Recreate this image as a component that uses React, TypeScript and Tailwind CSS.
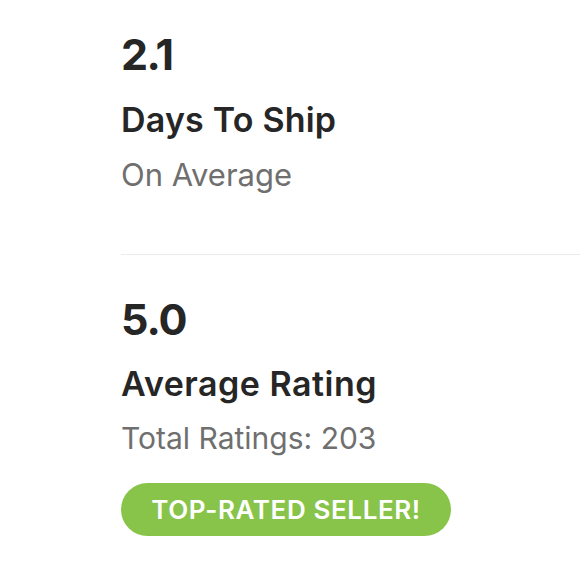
export default function App() {
  return (
    <div
      className="min-h-[580px] w-[580px] overflow-hidden bg-white pl-[121px] pt-[33px]"
      style={{ fontFamily: "Inter, 'Liberation Sans', sans-serif" }}
    >
      <div className="pr-[20px]">
        <div className="text-[43px] font-bold leading-[43px] tracking-[-1.5px] text-[#262626]">2.1</div>
        <div className="mt-[27px] text-[34px] font-semibold leading-[34px] tracking-[0.2px] text-[#262626]">Days To Ship</div>
        <div className="mt-[22px] text-[31px] leading-[31px] text-[#6f6f6f]">On Average</div>
      </div>

      <div className="mt-[64px] h-px w-full bg-[#ececec]" />

      <div>
        <div className="mt-[43px] text-[43px] font-bold leading-[43px] tracking-[-1px] text-[#262626]">5.0</div>
        <div className="mt-[26px] text-[34px] font-semibold leading-[34px] tracking-[0.5px] text-[#262626]">Average Rating</div>
        <div className="mt-[22px] text-[30px] leading-[30px] text-[#6f6f6f]">Total Ratings: 203</div>
        <div className="mt-[30px] flex h-[53px] w-[330px] items-center justify-center rounded-full bg-[#88c44a] text-[26px] font-semibold tracking-[0.6px] text-white">
          TOP-RATED SELLER!
        </div>
      </div>
    </div>
  );
}
